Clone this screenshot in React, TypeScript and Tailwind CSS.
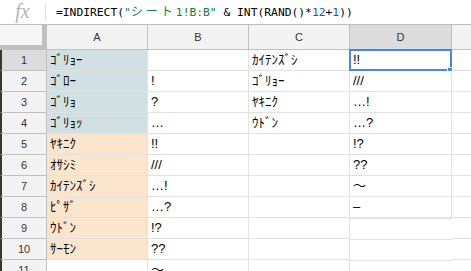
import React from "react";

type Row = { a: string; b: string; c: string; d: string; aBg: string };

const TEAL = "bg-[#d0e0e3]";
const PEACH = "bg-[#fce5cd]";

const rows: Row[] = [
  { a: "ｺﾞﾘｮｰ", b: "", c: "ｶｲﾃﾝｽﾞｼ", d: "!!", aBg: TEAL },
  { a: "ｺﾞﾛｰ", b: "!", c: "ｺﾞﾘｮｰ", d: "///", aBg: TEAL },
  { a: "ｺﾞﾘｮ", b: "?", c: "ﾔｷﾆｸ", d: "…!", aBg: TEAL },
  { a: "ｺﾞﾘｮｯ", b: "…", c: "ｳﾄﾞﾝ", d: "…?", aBg: TEAL },
  { a: "ﾔｷﾆｸ", b: "!!", c: "", d: "!?", aBg: PEACH },
  { a: "ｵｻｼﾐ", b: "///", c: "", d: "??", aBg: PEACH },
  { a: "ｶｲﾃﾝｽﾞｼ", b: "…!", c: "", d: "〜", aBg: PEACH },
  { a: "ﾋﾟｻﾞ", b: "…?", c: "", d: "–", aBg: PEACH },
  { a: "ｳﾄﾞﾝ", b: "!?", c: "", d: "", aBg: PEACH },
  { a: "ｻｰﾓﾝ", b: "??", c: "", d: "", aBg: PEACH },
  { a: "", b: "〜", c: "", d: "", aBg: "bg-white" },
];

const cellFont = {
  fontFamily: '"Liberation Sans", "Noto Sans CJK JP", sans-serif',
};

const FormulaBar = () => (
  <div className="h-[25px] flex items-center bg-white border-b border-[#c0c0c0]">
    <div className="w-[46px] h-[19px] flex items-center justify-center border-r border-[#e0e0e0]">
      <span
        className="text-[20px] italic text-[#b4b4b4] leading-none -mt-[2px]"
        style={{ fontFamily: '"Liberation Serif", serif' }}
      >
        fx
      </span>
    </div>
    <div
      className="pl-[10px] text-[11.3px] text-black whitespace-nowrap"
      style={{ fontFamily: '"DejaVu Sans Mono", "Noto Sans CJK JP", monospace' }}
    >
      =INDIRECT(
      <span className="text-[#0b8043]">
        "<span className="text-[12px] tracking-[3px]">シート</span>1!B:B"
      </span>{" "}
      &amp; INT(RAND()*<span className="text-[#1155cc]">12</span>+
      <span className="text-[#1155cc]">1</span>))
    </div>
  </div>
);

const Header = () => (
  <div className="flex h-[25px] text-[11px] text-[#333]" style={cellFont}>
    <div className="w-[47px] shrink-0 bg-[#f6f6f6] border-r-[5px] border-b-[5px] border-[#c0c0c0]" />
    {["A", "B", "C"].map((l) => (
      <div
        key={l}
        className="w-[101px] shrink-0 flex items-center justify-center bg-[#f3f3f3] border-r border-b border-[#c0c0c0]"
      >
        {l}
      </div>
    ))}
    <div className="w-[102px] shrink-0 flex items-center justify-center bg-[#dcdcdc] border-r border-b border-[#c0c0c0]">
      D
    </div>
    <div className="flex-1 bg-[#f3f3f3] border-b border-[#c0c0c0]" />
  </div>
);

const Cell = ({
  text,
  w,
  bg = "bg-white",
}: {
  text: string;
  w: string;
  bg?: string;
}) => (
  <div
    className={`${w} shrink-0 flex items-center pl-[3px] text-[13px] text-black border-r border-b border-[#e2e2e2] whitespace-nowrap overflow-hidden ${bg}`}
  >
    {text}
  </div>
);

export default function App() {
  return (
    <div className="w-[471px] h-[271px] overflow-hidden bg-white">
      <FormulaBar />
      <Header />
      <div style={cellFont}>
        {rows.map((r, i) => (
          <div key={i} className="flex h-[21px]">
            <div
              className={`w-[47px] shrink-0 flex items-center justify-center text-[11px] text-[#333] border-l-2 border-l-[#3a3632] border-r border-b border-[#c0c0c0] ${
                i === 0 ? "bg-[#dcdcdc]" : "bg-[#f3f3f3]"
              }`}
            >
              {i + 1}
            </div>
            <Cell text={r.a} w="w-[101px]" bg={r.aBg} />
            <Cell text={r.b} w="w-[101px]" />
            <Cell text={r.c} w="w-[101px]" />
            <div className="relative w-[102px] shrink-0">
              <Cell text={r.d} w="w-[102px]" />
              {i === 0 && (
                <>
                  <div className="absolute -left-[1px] -top-[1px] w-[103px] h-[22px] border-2 border-[#4285f4]" />
                  <div className="absolute left-[97px] top-[17px] w-[6px] h-[6px] bg-[#4285f4] border border-white" />
                </>
              )}
            </div>
            <div className="flex-1 border-b border-[#e2e2e2]" />
          </div>
        ))}
      </div>
    </div>
  );
}
